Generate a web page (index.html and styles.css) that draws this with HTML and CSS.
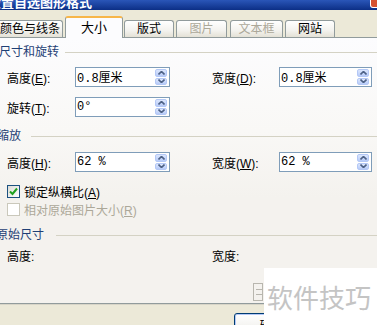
FILE: index.html
```html
<!DOCTYPE html>
<html lang="zh-CN">
<head>
    <meta charset="UTF-8">
    <title>设置自选图形格式</title>
    <link rel="stylesheet" href="styles.css">
</head>
<body>
    <div class="dialog">
        <div class="titlebar">
            <span class="title">设置自选图形格式</span>
            <span class="close"></span>
        </div>

        <div class="tabs">
            <div class="tab tab-lines">颜色与线条</div>
            <div class="tab tab-size active">大小</div>
            <div class="tab tab-layout">版式</div>
            <div class="tab tab-picture disabled">图片</div>
            <div class="tab tab-textbox disabled">文本框</div>
            <div class="tab tab-web">网站</div>
        </div>

        <div class="panel">
            <div class="group group-first"><span>尺寸和旋转</span></div>

            <div class="row row-first">
                <span class="label">高度(<u>E</u>):</span>
                <div class="spin-input">
                    <span class="value">0.8厘米</span>
                    <span class="spinner">
                        <i class="up"><svg width="7" height="4" viewBox="0 0 7 4"><path d="M0.5 3.5L3.5 0.5L6.5 3.5"/></svg></i>
                        <i class="down"><svg width="7" height="4" viewBox="0 0 7 4"><path d="M0.5 0.5L3.5 3.5L6.5 0.5"/></svg></i>
                    </span>
                </div>
                <span class="label label-right">宽度(<u>D</u>):</span>
                <div class="spin-input">
                    <span class="value">0.8厘米</span>
                    <span class="spinner">
                        <i class="up"><svg width="7" height="4" viewBox="0 0 7 4"><path d="M0.5 3.5L3.5 0.5L6.5 3.5"/></svg></i>
                        <i class="down"><svg width="7" height="4" viewBox="0 0 7 4"><path d="M0.5 0.5L3.5 3.5L6.5 0.5"/></svg></i>
                    </span>
                </div>
            </div>

            <div class="row row-second">
                <span class="label">旋转(<u>T</u>):</span>
                <div class="spin-input">
                    <span class="value">0°</span>
                    <span class="spinner">
                        <i class="up"><svg width="7" height="4" viewBox="0 0 7 4"><path d="M0.5 3.5L3.5 0.5L6.5 3.5"/></svg></i>
                        <i class="down"><svg width="7" height="4" viewBox="0 0 7 4"><path d="M0.5 0.5L3.5 3.5L6.5 0.5"/></svg></i>
                    </span>
                </div>
            </div>

            <div class="group group-scale"><span>缩放</span></div>

            <div class="row row-scale">
                <span class="label">高度(<u>H</u>):</span>
                <div class="spin-input">
                    <span class="value">62 %</span>
                    <span class="spinner">
                        <i class="up"><svg width="7" height="4" viewBox="0 0 7 4"><path d="M0.5 3.5L3.5 0.5L6.5 3.5"/></svg></i>
                        <i class="down"><svg width="7" height="4" viewBox="0 0 7 4"><path d="M0.5 0.5L3.5 3.5L6.5 0.5"/></svg></i>
                    </span>
                </div>
                <span class="label label-right">宽度(<u>W</u>):</span>
                <div class="spin-input">
                    <span class="value">62 %</span>
                    <span class="spinner">
                        <i class="up"><svg width="7" height="4" viewBox="0 0 7 4"><path d="M0.5 3.5L3.5 0.5L6.5 3.5"/></svg></i>
                        <i class="down"><svg width="7" height="4" viewBox="0 0 7 4"><path d="M0.5 0.5L3.5 3.5L6.5 0.5"/></svg></i>
                    </span>
                </div>
            </div>

            <div class="check check-lock">
                <span class="box checked"><svg width="9" height="9" viewBox="0 0 9 9"><path d="M1 4.5L3.5 7L8 1.5"/></svg></span>
                <span>锁定纵横比(<u>A</u>)</span>
            </div>
            <div class="check check-relative disabled">
                <span class="box"></span>
                <span>相对原始图片大小(<u>R</u>)</span>
            </div>

            <div class="group group-original"><span>原始尺寸</span></div>

            <div class="row row-original">
                <span class="label">高度:</span>
                <span></span>
                <span class="label label-right">宽度:</span>
            </div>
        </div>

        <div class="footer">
            <button class="btn">确定</button>
        </div>

        <div class="ghost-icon"><span></span><span></span></div>
        <div class="watermark">软件技巧</div>
    </div>
</body>
</html>
```

FILE: styles.css
```css
body {
    margin: 0;
    width: 377px;
    height: 325px;
    overflow: hidden;
    font-family: "Liberation Sans", "Noto Sans CJK SC", sans-serif;
    font-size: 12px;
    color: #000;
    background-color: #ECE9D8;
}

.dialog {
    position: relative;
    width: 377px;
    height: 325px;
    overflow: hidden;
}

/* title bar, mostly cut off at the top */
.titlebar {
    height: 10px;
    overflow: hidden;
    display: flex;
    justify-content: space-between;
    background: linear-gradient(#2a56b8, #0c2f86);
}

.titlebar .title {
    display: block;
    margin-top: -4px;
    margin-left: -12px;
    line-height: 13px;
    font-size: 13px;
    font-weight: bold;
    color: #fff;
}

.titlebar .close {
    width: 9px;
    height: 7px;
    margin-right: -4px;
    border: 1px solid #fff;
    border-top: none;
    border-radius: 0 0 3px 3px;
    background-color: #d5512f;
}

/* tabs */
.tabs {
    height: 27px;
    display: flex;
    align-items: flex-end;
    gap: 2px;
    margin-left: -8px;
}

.tab {
    height: 16px;
    line-height: 16px;
    text-align: center;
    border: 1px solid #919b9c;
    border-bottom: none;
    border-radius: 3px 3px 0 0;
    background: linear-gradient(#ffffff, #f3f2ee 60%, #e4e1d6);
    white-space: nowrap;
}

.tab-lines { width: 69px; text-align: right; padding-right: 2px; box-sizing: content-box; width: 67px; }
.tab-size { width: 56px; }
.tab-layout { width: 48px; margin-left: -1px; }
.tab-picture { width: 49px; }
.tab-textbox { width: 51px; margin-left: 1px; }
.tab-web { width: 48px; }

.tab.active {
    position: relative;
    z-index: 1;
    height: 20px;
    line-height: 19px;
    margin-bottom: -1px;
    border-top: 2px solid #f7b64a;
    background: #fcfcfe;
    font-size: 13px;
}

.tab.disabled {
    color: #aca899;
}

/* tab page */
.panel {
    height: 265px;
    margin-left: -4px;
    margin-right: -6px;
    padding-left: 4px;
    border-top: 1px solid #919b9c;
    border-bottom: 1px solid #919b9c;
    background: linear-gradient(#fcfcfe, #f9f8f6 35%, #f4f2ee 60%, #f4f2ee);
    box-shadow: 0 1px 0 #d8d5c8;
}

.group {
    height: 14px;
    line-height: 14px;
    display: flex;
    align-items: center;
    gap: 6px;
    margin-left: -3px;
    color: #1f3f75;
}

.group::after {
    content: "";
    flex: 1;
    border-top: 1px solid #d4d2c4;
}

.group-first { margin-top: 7px; margin-left: -1px; }
.group-scale { margin-top: 12px; gap: 10px; }
.group-original { margin-top: 12px; margin-left: -4px; gap: 12px; }

.row {
    display: grid;
    grid-template-columns: 68px 95px 109px 93px;
    align-items: center;
    height: 20px;
    padding-left: 7px;
}

.row-first { margin-top: 8px; }
.row-second { margin-top: 10px; }
.row-scale { margin-top: 9px; }
.row-original { margin-top: 5px; height: 14px; }

.label {
    white-space: nowrap;
}

.label-right {
    padding-left: 42px;
}

.spin-input {
    height: 18px;
    display: flex;
    align-items: center;
    justify-content: space-between;
    border: 1px solid #7f9db9;
    background-color: #fff;
    padding-left: 1px;
}

.spin-input .value {
    font-family: "Liberation Mono", "Noto Sans CJK SC", monospace;
    font-size: 12px;
}

.spinner {
    width: 12px;
    height: 16px;
    margin-right: 2px;
    display: flex;
    flex-direction: column;
    gap: 1px;
}

.spinner i {
    flex: 1;
    display: flex;
    align-items: center;
    justify-content: center;
    border: 1px solid #b4c8f6;
    border-radius: 2px;
    background: linear-gradient(#dbe6fd, #b7cbf8);
}

.spinner svg path {
    fill: none;
    stroke: #4d6185;
    stroke-width: 1.6;
}

/* checkboxes */
.check {
    height: 14px;
    display: flex;
    align-items: center;
    gap: 4px;
    padding-left: 7px;
}

.check-lock { margin-top: 12px; }
.check-relative { margin-top: 4px; }

.check .box {
    width: 11px;
    height: 11px;
    display: flex;
    align-items: center;
    justify-content: center;
    border: 1px solid #1c5180;
    background: linear-gradient(135deg, #dcdcd7, #ffffff);
}

.check .box svg path {
    fill: none;
    stroke: #21a121;
    stroke-width: 2;
}

.check.disabled {
    color: #aca899;
}

.check.disabled .box {
    border-color: #cac8bb;
    background: #fff;
}

/* bottom buttons */
.footer {
    height: 21px;
    overflow: hidden;
    padding-left: 234px;
}

.btn {
    margin-top: 9px;
    width: 75px;
    height: 23px;
    padding: 0;
    border: 1px solid #003c74;
    border-radius: 3px;
    background: linear-gradient(#ffffff, #ecebe6);
    box-shadow: inset 0 0 0 1px #b4c8f6;
    font-family: "Liberation Sans", "Noto Sans CJK SC", sans-serif;
    font-size: 12px;
}

/* overlays */
.ghost-icon {
    position: absolute;
    left: 253px;
    top: 283px;
    width: 10px;
    height: 18px;
    border: 1px solid #b8b6ae;
    display: flex;
    flex-direction: column;
    justify-content: center;
    gap: 4px;
    padding-left: 2px;
    box-sizing: border-box;
}

.ghost-icon span {
    width: 6px;
    border-top: 1px solid #b8b6ae;
}

.watermark {
    position: absolute;
    left: 264px;
    top: 268px;
    right: 0;
    bottom: 0;
    padding-top: 15px;
    padding-left: 3px;
    background-color: #fff;
    color: #c4c4c4;
    font-family: "Noto Sans CJK SC", sans-serif;
    font-size: 26px;
    line-height: 28px;
    white-space: nowrap;
}
```
